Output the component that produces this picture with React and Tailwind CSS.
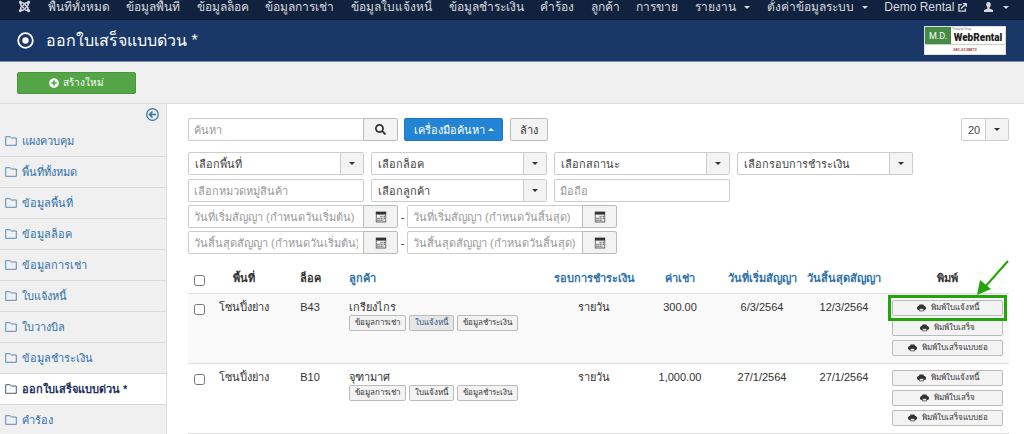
import clsx from 'clsx';
import { FaJoomla, FaPlusCircle, FaSearch } from 'react-icons/fa';

const navItems = [
  { label: 'พื้นที่ทั้งหมด' },
  { label: 'ข้อมูลพื้นที่' },
  { label: 'ข้อมูลล็อค' },
  { label: 'ข้อมูลการเช่า' },
  { label: 'ข้อมูลใบแจ้งหนี้' },
  { label: 'ข้อมูลชำระเงิน' },
  { label: 'คำร้อง' },
  { label: 'ลูกค้า' },
  { label: 'การขาย' },
  { label: 'รายงาน', menu: true },
  { label: 'ตั้งค่าข้อมูลระบบ', menu: true },
];

const sideItems = [
  'แผงควบคุม',
  'พื้นที่ทั้งหมด',
  'ข้อมูลพื้นที่',
  'ข้อมูลล็อค',
  'ข้อมูลการเช่า',
  'ใบแจ้งหนี้',
  'ใบวางบิล',
  'ข้อมูลชำระเงิน',
  'ออกใบเสร็จแบบด่วน *',
  'คำร้อง',
];

const rows = [
  { area: 'โซนปิ้งย่าง', lock: 'B43', name: 'เกรียงไกร', cycle: 'รายวัน', rent: '300.00', start: '6/3/2564', end: '12/3/2564', highlight: true },
  { area: 'โซนปิ้งย่าง', lock: 'B10', name: 'จุฑามาศ', cycle: 'รายวัน', rent: '1,000.00', start: '27/1/2564', end: '27/1/2564' },
];

const rowLinks = ['ข้อมูลการเช่า', 'ใบแจ้งหนี้', 'ข้อมูลชำระเงิน'];
const printLinks = ['พิมพ์ใบแจ้งหนี้', 'พิมพ์ใบเสร็จ', 'พิมพ์ใบเสร็จแบบย่อ'];

function Caret({ up }) {
  return (
    <svg viewBox="0 0 6 3" className="h-[3px] w-[6px] shrink-0" fill="currentColor" aria-hidden="true">
      <path d={up ? 'M0 3L3 0l3 3z' : 'M0 0h6L3 3z'} />
    </svg>
  );
}

function FolderIcon() {
  return (
    <svg viewBox="0 0 12 10" className="h-[10px] w-[12px] shrink-0" fill="none" stroke="currentColor" strokeWidth=".8" aria-hidden="true">
      <path d="M.7 9.3V.7h4.300l1.400 1.300h4.900v7.300z" />
    </svg>
  );
}

function CalendarIcon() {
  return (
    <svg viewBox="0 0 12 12" className="h-3 w-3" fill="currentColor" aria-hidden="true">
      <path d="M.8 .6h10.400v3H.8z" />
      <path d="M.8 3.600v7.800h10.400V3.600h-.9v6.900H1.700V3.600z" opacity=".75" />
      <path d="M5.500 4.800h1.300v1.500H5.500zM7.500 4.800h.9v1.500h-.9zM9 4.800h.9v1.500H9zM2.300 6.800h1.400v1.300H2.300zM4.300 6.800h.7v1.300h-.7zM5.500 6.800h1.300v1.300H5.500zM7.500 6.800h.9v1.300h-.9zM9 6.800h.9v1.300H9zM2.300 8.600h1.400v1.300H2.300zM4.300 8.600h.7v1.300h-.7zM5.500 8.600h1.300v1.300H5.500zM7.500 8.600h.9v1.300h-.9z" opacity=".7" />
    </svg>
  );
}

function PrintIcon() {
  return (
    <svg viewBox="0 0 10 8" className="h-2 w-[9px] shrink-0" aria-hidden="true">
      <path d="M2.200 1.800L2.800 0h4.400l.6 1.800z" fill="#333" />
      <path d="M1.300 1.800h7.400L10 3.200v2L8.700 6.200H1.300L0 5.200v-2z" fill="#333" />
      <path d="M2.600 4.600h4.800v2.600H2.600z" fill="#eee" stroke="#333" strokeWidth=".8" />
    </svg>
  );
}

function SelectBox({ label, value, className }) {
  return (
    <div className={clsx('relative h-[23px] rounded-[2px] border border-[#ccc] bg-white text-[#444]', className)}>
      <select aria-label={label} className="h-full w-full appearance-none bg-transparent px-[6px] leading-[20px] outline-none">
        <option>{value}</option>
      </select>
      <span className="pointer-events-none absolute inset-y-0 right-0 flex w-[23px] items-center justify-center border-l border-[#ccc] bg-[#f3f3f3] text-[#333]">
        <Caret />
      </span>
    </div>
  );
}

function TextBox({ label, className }) {
  return (
    <input
      type="text"
      aria-label={label}
      placeholder={label}
      className={clsx('h-[23px] border border-[#ccc] bg-white px-[5px] outline-none placeholder:text-[#999]', className)}
    />
  );
}

function DateBox({ label }) {
  return (
    <div className="flex">
      <TextBox label={label} className="w-[176px] rounded-l-[2px]" />
      <button type="button" aria-label={label} className="-ml-px flex h-[23px] w-[35px] items-center justify-center rounded-r-[2px] border border-[#bbb] bg-[#f3f3f3] text-[#333]">
        <CalendarIcon />
      </button>
    </div>
  );
}

function DateRange({ from, to }) {
  return (
    <div className="flex items-center">
      <DateBox label={from} />
      <span className="w-[9px] text-center">-</span>
      <DateBox label={to} />
    </div>
  );
}

// Green frame and pointer over the first print button
function Callout() {
  return (
    <>
      <span className="pointer-events-none absolute inset-x-[2px] top-px h-[26px] border-[3px] border-[#22a40a]" />
      <svg viewBox="0 0 34 36" className="pointer-events-none absolute -top-[34px] right-0 h-9 w-[34px]" aria-hidden="true">
        <path d="M33 1L9 28" stroke="#22a40a" strokeWidth="2" />
        <path d="M2 35l3-15 11 9z" fill="#22a40a" />
      </svg>
    </>
  );
}

export default function App() {
  return (
    <div className="flex h-screen flex-col overflow-hidden bg-white font-['Liberation_Sans',sans-serif] text-[11px] leading-[14px] text-[#333]">
      <nav className="flex h-5 shrink-0 items-start justify-between border-b border-[#0c192e] bg-[#10223e] pr-[15px] pl-[18px] text-[12px] text-[#d5d9df]">
        <a href="#" aria-label="Joomla">
          <FaJoomla className="h-[13px] w-[13px]" />
        </a>
        {navItems.map((item) => (
          <a key={item.label} href="#" className="flex items-center gap-2 whitespace-nowrap">
            {item.label}
            {item.menu && <Caret />}
          </a>
        ))}
        <a href="#" className="flex items-center gap-1 whitespace-nowrap">
          Demo Rental
          <svg viewBox="0 0 9 9" className="h-[9px] w-[9px]" fill="none" stroke="currentColor" strokeWidth="1.3" aria-hidden="true">
            <path d="M4 1.7H.9v6.5h6.4V5.4M3 5.8L7.8 1M5 .7h3.3V4" />
          </svg>
        </a>
        <a href="#" aria-label="User" className="flex h-[14px] items-center gap-[10px]">
          <svg viewBox="0 0 9 10" className="h-[10px] w-[9px]" fill="currentColor" aria-hidden="true">
            <path d="M4.5 0C6 0 6.8 1 6.8 2.600S6 5 5.500 5.600v.9L9 8v2H0V8l3.500-1.500v-.9C3 5 2.200 4.200 2.200 2.600S3 0 4.500 0z" />
          </svg>
          <Caret />
        </a>
      </nav>

      <header className="flex h-[42px] shrink-0 items-center border-b border-[#7f8aa8] bg-[#1a3867] pr-[18px] pl-[17px] text-white">
        <svg viewBox="0 0 17 17" className="h-[17px] w-[17px]" aria-hidden="true">
          <circle cx="8.500" cy="8.500" r="7.300" fill="none" stroke="#fff" strokeWidth="1.800" />
          <circle cx="8.500" cy="8.500" r="3.200" fill="#fff" />
        </svg>
        <h1 className="ml-3 text-[16px] leading-6">ออกใบเสร็จแบบด่วน *</h1>
        <div className="ml-auto flex h-[29px] w-[82px] flex-col border border-[#ddd] bg-white">
          <div className="flex h-[19px] border-b border-[#bcd3bc]">
            <div className="flex w-[26px] shrink-0 items-center justify-center bg-[#458b45] font-['Roboto',sans-serif] text-[9px]">M.D.</div>
            <div className="flex-1 text-center font-['Roboto',sans-serif] text-[#222]">
              <div className="h-1 pl-px text-left text-[3px] leading-[5px] text-[#777]">Thailand Shop</div>
              <div className="text-[10px] leading-[13px] font-black">WebRental</div>
            </div>
          </div>
          <div className="text-center text-[4px] leading-[9px] font-bold text-[#a33]">081-6138873</div>
        </div>
      </header>

      <div className="flex h-[42px] shrink-0 items-center border-b border-[#ddd] bg-[#f0f0f0] px-[17px]">
        <button type="button" className="flex h-[22px] w-[119px] items-center justify-center gap-1 rounded-[2px] border border-[#4a9440] bg-[#54a546] text-[10px] text-white">
          <FaPlusCircle className="h-[10px] w-[10px]" />
          สร้างใหม่
        </button>
      </div>

      <div className="flex min-h-0 flex-1">
        <aside className="w-[167px] shrink-0 border-r border-[#ddd] bg-[#f0f0f0] text-[#3071a9]">
          <div className="flex h-[22px] justify-end pt-1 pr-[7px]">
            <button type="button" aria-label="ซ่อนแถบข้าง" className="h-[13px] w-[13px]">
              <svg viewBox="0 0 13 13" fill="none" stroke="currentColor" aria-hidden="true">
                <circle cx="6.500" cy="6.500" r="5.800" strokeWidth="1.200" />
                <path d="M10 6.500H4M6.500 3.500l-3 3 3 3" strokeWidth="1.600" />
              </svg>
            </button>
          </div>
          <ul>
            {sideItems.map((item) => (
              <li key={item}>
                <a
                  href="#"
                  className={clsx(
                    'flex h-[31px] items-center gap-[5px] border-b border-[#d8d8d8] pl-[5px] whitespace-nowrap',
                    item.endsWith('*') && 'bg-white font-bold text-[#1a2f5c]'
                  )}
                >
                  <FolderIcon />
                  {item}
                </a>
              </li>
            ))}
          </ul>
        </aside>

        <main className="min-w-0 flex-1 pt-[14px] pr-[15px] pl-[21px]">
          <div className="flex items-center">
            <TextBox label="ค้นหา" className="w-[176px] rounded-l-[2px]" />
            <button type="button" aria-label="ค้นหา" className="-ml-px flex h-[23px] w-[35px] items-center justify-center rounded-r-[2px] border border-[#bbb] bg-[#f3f3f3]">
              <FaSearch className="h-[11px] w-[11px]" />
            </button>
            <button type="button" className="ml-[6px] flex h-[23px] w-[99px] items-center justify-center gap-[3px] rounded-[2px] border border-[#1f76bd] bg-[#2384d3] text-white">
              เครื่องมือค้นหา
              <Caret up />
            </button>
            <button type="button" className="ml-[7px] h-[23px] w-[38px] rounded-[2px] border border-[#bbb] bg-[#f3f3f3]">ล้าง</button>
            <SelectBox label="จำนวนรายการ" value="20" className="ml-auto w-[48px]" />
          </div>

          <div className="mt-[11px] flex flex-wrap gap-x-[7px] gap-y-1">
            <SelectBox label="พื้นที่" value="เลือกพื้นที่" className="w-[176px]" />
            <SelectBox label="ล็อค" value="เลือกล็อค" className="w-[176px]" />
            <SelectBox label="สถานะ" value="เลือกสถานะ" className="w-[176px]" />
            <SelectBox label="รอบการชำระเงิน" value="เลือกรอบการชำระเงิน" className="w-[176px]" />
            <TextBox label="เลือกหมวดหมู่สินค้า" className="w-[176px] rounded-[2px]" />
            <SelectBox label="ลูกค้า" value="เลือกลูกค้า" className="w-[176px]" />
            <TextBox label="มือถือ" className="w-[176px] rounded-[2px]" />
          </div>
          <div className="mt-[3px] space-y-[3px]">
            <DateRange from="วันที่เริ่มสัญญา (กำหนดวันเริ่มต้น)" to="วันที่เริ่มสัญญา (กำหนดวันสิ้นสุด)" />
            <DateRange from="วันสิ้นสุดสัญญา (กำหนดวันเริ่มต้น)" to="วันสิ้นสุดสัญญา (กำหนดวันสิ้นสุด)" />
          </div>

          <table className="mt-[11px] w-full table-fixed text-center">
            <colgroup>
              <col className="w-[23px]" />
              <col className="w-[66px]" />
              <col className="w-[66px]" />
              <col />
              <col className="w-[88px]" />
              <col className="w-[84px]" />
              <col className="w-[80px]" />
              <col className="w-[84px]" />
              <col className="w-[123px]" />
            </colgroup>
            <thead>
              <tr className="h-[28px] align-top whitespace-nowrap [&>th]:pt-[6px]">
                <th className="text-left">
                  <input type="checkbox" aria-label="เลือกทั้งหมด" className="mt-1 ml-[6px] block h-[11px] w-[11px]" />
                </th>
                <th>พื้นที่</th>
                <th>ล็อค</th>
                <th className="pl-[6px] text-left"><a href="#" className="text-[#3071a9]">ลูกค้า</a></th>
                <th><a href="#" className="text-[#3071a9]">รอบการชำระเงิน</a></th>
                <th><a href="#" className="text-[#3071a9]">ค่าเช่า</a></th>
                <th><a href="#" className="text-[#3071a9]">วันที่เริ่มสัญญา</a></th>
                <th><a href="#" className="text-[#3071a9]">วันสิ้นสุดสัญญา</a></th>
                <th>พิมพ์</th>
              </tr>
            </thead>
            <tbody>
              {rows.map((row) => (
                <tr key={row.lock} className="h-[70px] border-y border-[#ddd] align-top odd:bg-[#f9f9f9] [&>td]:pt-[6px]">
                  <td>
                    <input type="checkbox" aria-label={row.lock} className="mt-1 ml-[6px] block h-[11px] w-[11px]" />
                  </td>
                  <td>{row.area}</td>
                  <td>{row.lock}</td>
                  <td className="pl-[6px] text-left">
                    {row.name}
                    <div className="mt-px flex gap-[3px]">
                      {rowLinks.map((label, i) => (
                        <button
                          key={label}
                          type="button"
                          className={clsx(
                            'h-4 rounded-[2px] border border-[#bbb] px-[5px] text-[8px] leading-[12px] whitespace-nowrap',
                            row.highlight && i === 1 ? 'bg-[#e6e6e6] text-[#2a5583]' : 'bg-[#f3f3f3]'
                          )}
                        >
                          {label}
                        </button>
                      ))}
                    </div>
                  </td>
                  <td>{row.cycle}</td>
                  <td>{row.rent}</td>
                  <td>{row.start}</td>
                  <td>{row.end}</td>
                  <td className="relative px-[6px]">
                    <div className="space-y-1">
                      {printLinks.map((label) => (
                        <button key={label} type="button" className="flex h-4 w-full items-center justify-center gap-[5px] rounded-[2px] border border-[#bbb] bg-[#f3f3f3] text-[8px] leading-[12px] whitespace-nowrap">
                          <PrintIcon />
                          {label}
                        </button>
                      ))}
                    </div>
                    {row.highlight && <Callout />}
                  </td>
                </tr>
              ))}
            </tbody>
          </table>
        </main>
      </div>
    </div>
  );
}
